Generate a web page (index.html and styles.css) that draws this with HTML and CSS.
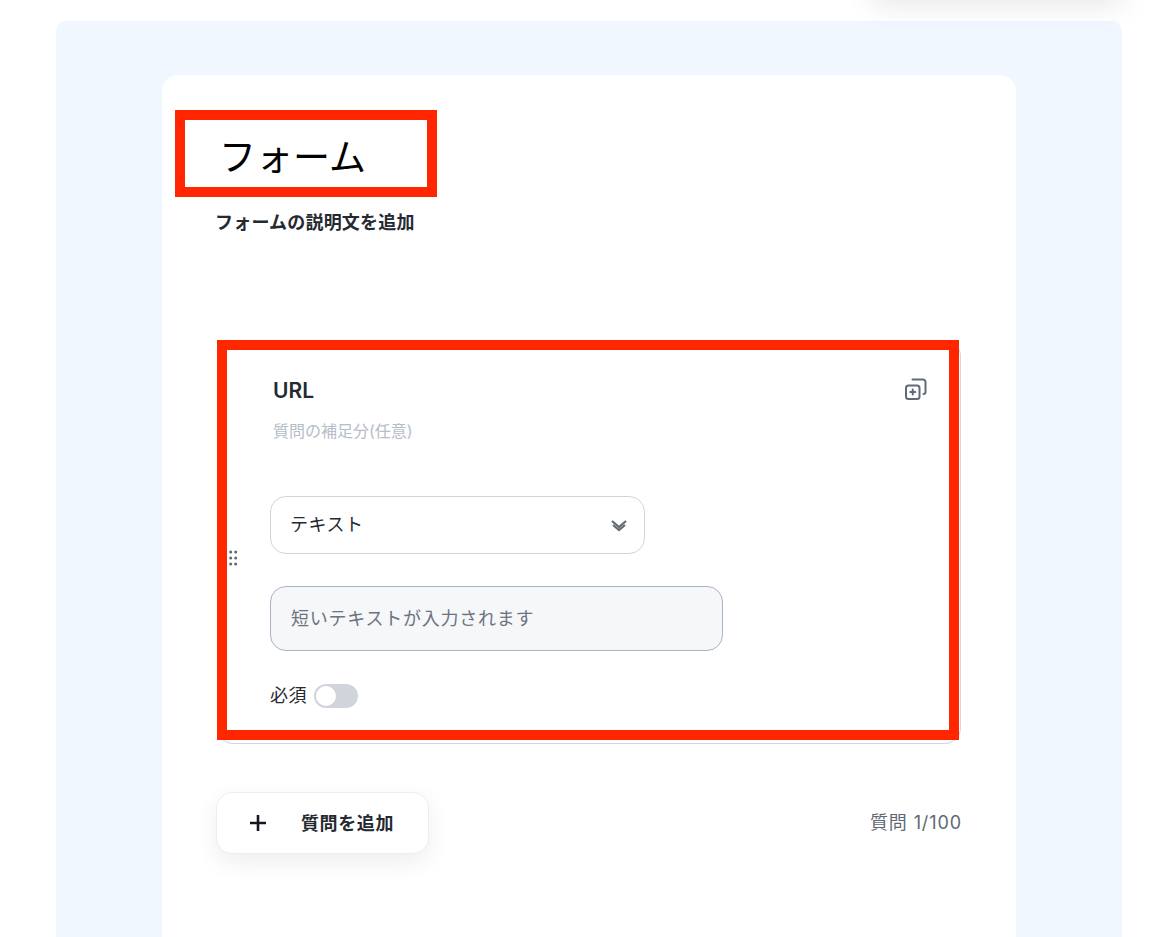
FILE: index.html
```html
<!DOCTYPE html>
<html lang="ja">
<head>
  <meta charset="UTF-8">
  <title>フォーム</title>
  <link rel="stylesheet" href="styles.css">
</head>
<body>
  <div class="top-popover"></div>

  <main class="panel">
    <section class="form-card">
      <header class="form-head">
        <h1 class="form-title">フォーム</h1>
        <p class="form-desc">フォームの説明文を追加</p>
        <div class="mark mark-title"></div>
      </header>

      <div class="question">
        <div class="mark mark-question"></div>
        <span class="drag-handle">
          <svg width="9" height="16" viewBox="0 0 9 16" fill="#5f6875">
            <circle cx="1.7" cy="2" r="1.5"/><circle cx="6.7" cy="2" r="1.5"/>
            <circle cx="1.7" cy="8" r="1.5"/><circle cx="6.7" cy="8" r="1.5"/>
            <circle cx="1.7" cy="14" r="1.5"/><circle cx="6.7" cy="14" r="1.5"/>
          </svg>
        </span>

        <div class="question-top">
          <div>
            <div class="question-name">URL</div>
            <div class="question-note">質問の補足分(任意)</div>
          </div>
          <svg class="copy-icon" width="24" height="24" viewBox="0 0 24 24" fill="none" stroke="#5f6b7a" stroke-width="2" stroke-linecap="round" stroke-linejoin="round">
            <rect x="2" y="8.5" width="13.5" height="13.5" rx="2.5"/>
            <path d="M8.5 2.5H19a2.5 2.5 0 0 1 2.5 2.5v10a2 2 0 0 1-2 2"/>
            <path d="M8.75 12.5v5M6.25 15h5"/>
          </svg>
        </div>

        <div class="type-select">
          <span>テキスト</span>
          <svg width="18" height="14" viewBox="0 0 18 14" fill="none" stroke="#636b75" stroke-width="2.2">
            <path d="M2 3l7 6 7-6"/>
            <path d="M3 7l6 5 6-5"/>
          </svg>
        </div>

        <div class="answer-preview">短いテキストが入力されます</div>

        <div class="required-row">
          <span>必須</span>
          <span class="toggle"><span class="toggle-knob"></span></span>
        </div>
      </div>

      <div class="form-foot">
        <button class="add-btn" type="button">
          <svg width="18" height="18" viewBox="0 0 18 18" stroke="#14171c" stroke-width="2.6">
            <path d="M9 1v16M1 9h16"/>
          </svg>
          <span>質問を追加</span>
        </button>
        <span class="question-count">質問 1/100</span>
      </div>
    </section>
  </main>
</body>
</html>
```

FILE: styles.css
```css
body {
  margin: 0;
  padding: 21px 49px 0 56px;
  box-sizing: border-box;
  height: 937px;
  overflow: hidden;
  position: relative;
  background: #fff;
  font-family: Inter, "Noto Sans CJK JP", sans-serif;
  color: #252a31;
}

.top-popover {
  position: absolute;
  top: -60px;
  left: 872px;
  width: 250px;
  height: 60px;
  background: #fff;
  box-shadow: 0 4px 30px rgba(0, 0, 0, 0.1);
}

.panel {
  height: 916px;
  padding: 54px 106px 0;
  box-sizing: border-box;
  background: #f0f7ff;
  border-radius: 10px 10px 0 0;
}

.form-card {
  height: 862px;
  padding: 0 55px;
  box-sizing: border-box;
  background: #fff;
  border-radius: 16px 16px 0 0;
}

.form-head {
  position: relative;
  height: 265px;
  padding-top: 59px;
  box-sizing: border-box;
}

.form-title {
  margin: 0 0 0 2px;
  font-size: 37px;
  line-height: 48px;
  font-weight: 400;
  color: #000;
}

.form-desc {
  margin: 29px 0 0 -2px;
  font-size: 18px;
  letter-spacing: 0.2px;
  line-height: 24px;
  font-weight: 700;
}

.mark {
  position: absolute;
  box-sizing: border-box;
  border: 10px solid #ff2600;
  pointer-events: none;
}

.mark-title {
  top: 35px;
  left: -42px;
  width: 262px;
  height: 87px;
}

.mark-question {
  top: 0;
  left: -1px;
  width: 742px;
  height: 400px;
  z-index: 1;
}

.question {
  position: relative;
  width: 744px;
  height: 404px;
  padding: 37px 32px 0 52px;
  box-sizing: border-box;
  background: #fff;
  border: 1px solid #d3d8df;
  border-top-width: 0;
  border-radius: 16px;
}

.drag-handle {
  position: absolute;
  top: 210px;
  left: 11px;
  line-height: 0;
  z-index: 2;
}

.question-top {
  display: flex;
  justify-content: space-between;
  align-items: flex-start;
}

.question-name {
  margin-left: 3px;
  font-size: 21px;
  line-height: 28px;
  font-weight: 600;
}

.question-note {
  margin: 14px 0 0 3px;
  font-size: 16px;
  line-height: 24px;
  color: #b6bdc7;
}

.type-select {
  display: flex;
  justify-content: space-between;
  align-items: center;
  width: 375px;
  height: 58px;
  margin-top: 53px;
  padding: 0 16px 0 19px;
  box-sizing: border-box;
  border: 1px solid #d0d5dd;
  border-radius: 16px;
  font-size: 18px;
  letter-spacing: 0.5px;
}

.type-select span {
  margin-bottom: 4px;
}

.answer-preview {
  display: flex;
  align-items: center;
  width: 453px;
  height: 65px;
  margin-top: 32px;
  padding: 0 0 3px 20px;
  box-sizing: border-box;
  background: #f5f7f9;
  border: 1px solid #a9b3c2;
  border-radius: 16px;
  font-size: 18px;
  letter-spacing: 0.75px;
  color: #6b7280;
}

.required-row {
  display: flex;
  align-items: center;
  gap: 7px;
  margin-top: 33px;
  font-size: 18px;
  letter-spacing: 0.5px;
  line-height: 24px;
}

.toggle {
  display: block;
  width: 44px;
  height: 24px;
  padding: 2px;
  box-sizing: border-box;
  background: #d1d5db;
  border-radius: 12px;
}

.toggle-knob {
  display: block;
  width: 20px;
  height: 20px;
  background: #fff;
  border-radius: 50%;
}

.form-foot {
  display: flex;
  justify-content: space-between;
  align-items: center;
  width: 745px;
  margin-top: 48px;
}

.add-btn {
  display: flex;
  align-items: center;
  gap: 34px;
  width: 213px;
  height: 62px;
  margin-left: -1px;
  padding: 0 0 2px 32px;
  box-sizing: border-box;
  background: #fff;
  border: 1px solid #eceef3;
  border-radius: 16px;
  box-shadow: 0 8px 24px rgba(0, 0, 0, 0.07);
  font-family: inherit;
  font-size: 18px;
  letter-spacing: 0.6px;
  font-weight: 700;
  color: #252a31;
}

.add-btn svg {
  margin-top: 2px;
}

.question-count {
  margin-bottom: 4px;
  font-size: 18px;
  letter-spacing: 0.9px;
  color: #5f6875;
}
```
